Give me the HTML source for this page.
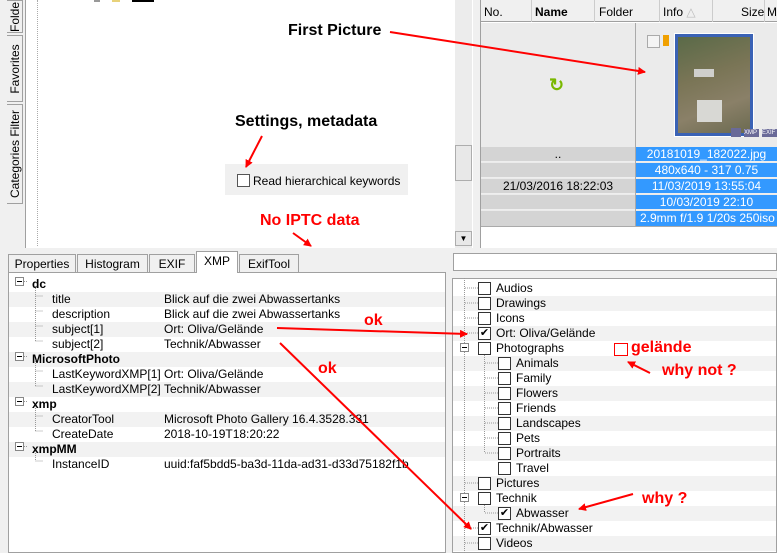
<!DOCTYPE html>
<html><head><meta charset="utf-8"><style>
*{margin:0;padding:0;box-sizing:border-box}
body{width:777px;height:553px;overflow:hidden;background:#f0f0f0;font-family:"Liberation Sans",sans-serif;font-size:12px;color:#000;position:relative}
.a{position:absolute}
.vt{position:absolute;left:7px;width:16px;background:#f0f0f0;border:1px solid #a0a0a0;border-left:none}
.vt span{position:absolute;left:50%;top:50%;transform:translate(-50%,-50%) rotate(-90deg);white-space:nowrap;font-size:12px}
.row{position:absolute;left:0;right:0;height:15px;line-height:15px;white-space:nowrap}
.g{background:#f2f2f2}
.cb{position:absolute;width:13px;height:13px;border:1px solid #333;background:#fff;font-size:11px;line-height:11px;text-align:center}
.cell{position:absolute;height:15px;line-height:15px;text-align:center;white-space:nowrap}
.tab{position:absolute;top:254px;height:19px;line-height:19px;border:1px solid #a0a0a0;border-bottom:none;background:#f0f0f0;text-align:center;font-size:12px}
.ann{position:absolute;font-weight:bold;font-size:16px;white-space:nowrap}
.red{color:#f00}
</style></head><body>
<div class="a" style="left:0;top:0;width:8px;height:553px;background:#f0f0f0"></div>
<div class="vt" style="top:0;height:33px"><span>Folde</span></div>
<div class="vt" style="top:35px;height:67px"><span>Favorites</span></div>
<div class="vt" style="top:104px;height:100px"><span>Categories Filter</span></div>
<div class="a" style="left:25px;top:0;width:448px;height:248px;background:#fff;border-left:1px solid #a0a0a0"></div>
<div class="a" style="left:37px;top:0;height:246px;border-left:1px dotted #aaa"></div>
<div class="a" style="left:94px;top:0;width:6px;height:2px;background:#999"></div>
<div class="a" style="left:112px;top:0;width:8px;height:2px;background:#e8d27a"></div>
<div class="a" style="left:132px;top:0;width:22px;height:2px;background:#000"></div>
<div class="a" style="left:455px;top:0;width:17px;height:248px;background:#ececec"></div>
<div class="a" style="left:455px;top:145px;width:17px;height:36px;background:#e8e8e8;border:1px solid #adadad"></div>
<div class="a" style="left:455px;top:231px;width:17px;height:15px;background:#e8e8e8;border:1px solid #adadad;font-size:8px;text-align:center;line-height:13px">▼</div>
<div class="a" style="left:225px;top:164px;width:183px;height:31px;background:#f0f0f0"></div>
<div class="cb" style="left:237px;top:174px;border-color:#555"></div>
<div class="a" style="left:253px;top:174px;font-size:12px">Read hierarchical keywords</div>
<div class="ann" style="left:288px;top:22px">First Picture</div>
<div class="ann" style="left:235px;top:113px">Settings, metadata</div>
<div class="ann red" style="left:260px;top:212px">No IPTC data</div>
<div class="a" style="left:480px;top:0;width:297px;height:248px;background:#fff;border-left:1px solid #a0a0a0"></div>
<div class="a" style="left:481px;top:0;width:296px;height:22px;background:#f0f0f0;border-bottom:1px solid #a0a0a0"></div>
<div class="a" style="left:484px;top:5px">No.</div>
<div class="a" style="left:531px;top:0;height:22px;border-left:1px solid #ccc"></div>
<div class="a" style="left:535px;top:5px;font-weight:bold">Name</div>
<div class="a" style="left:594px;top:0;height:22px;border-left:1px solid #ccc"></div>
<div class="a" style="left:599px;top:5px">Folder</div>
<div class="a" style="left:659px;top:0;height:22px;border-left:1px solid #ccc"></div>
<div class="a" style="left:663px;top:5px">Info <span style="color:#bbb">△</span></div>
<div class="a" style="left:712px;top:0;height:22px;border-left:1px solid #ccc"></div>
<div class="a" style="left:741px;top:5px">Size</div>
<div class="a" style="left:764px;top:0;height:22px;border-left:1px solid #ccc"></div>
<div class="a" style="left:767px;top:5px">M</div>
<div class="a" style="left:481px;top:23px;width:296px;height:204px;background:#ebebeb;border-bottom:1px solid #aaa"></div>
<div class="a" style="left:635px;top:23px;height:204px;border-left:1px solid #aaa"></div>
<div class="a" style="left:549px;top:75px;color:#7ab800;font-size:18px;font-weight:bold">↻</div>
<div class="cb" style="left:647px;top:35px;border-color:#aaa;background:#f4f4f4"></div>
<div class="a" style="left:663px;top:35px;width:6px;height:11px;background:#f0a000"></div>
<div class="a" style="left:675px;top:34px;width:78px;height:102px;border:3px solid #3a62b5;outline:1px solid #fff;background:linear-gradient(160deg,#5a6a48,#7a7556 40%,#8a8068 70%,#6b6a50)"></div>
<div class="a" style="left:697px;top:100px;width:25px;height:22px;background:#d8d8d4"></div>
<div class="a" style="left:694px;top:69px;width:20px;height:8px;background:#cfcfcc"></div>
<div class="a" style="left:731px;top:128px;width:10px;height:9px;background:#6a6a98"></div>
<div class="a" style="left:744px;top:129px;width:15px;height:8px;background:#6a6a98;color:#fff;font-size:6px;line-height:8px">XMP</div>
<div class="a" style="left:762px;top:129px;width:15px;height:8px;background:#6a6a98;color:#fff;font-size:6px;line-height:8px">EXIF</div>
<div class="cell" style="left:481px;top:147px;width:154px;background:#d4d4d4;border-bottom:1px solid #eee">..</div>
<div class="cell" style="left:481px;top:163px;width:154px;background:#d4d4d4;border-bottom:1px solid #eee"></div>
<div class="cell" style="left:481px;top:179px;width:154px;background:#d4d4d4;border-bottom:1px solid #eee">21/03/2016 18:22:03</div>
<div class="cell" style="left:481px;top:195px;width:154px;background:#d4d4d4;border-bottom:1px solid #eee"></div>
<div class="cell" style="left:481px;top:211px;width:154px;background:#d4d4d4"></div>
<div class="cell" style="left:636px;top:147px;width:141px;background:#3399ff;color:#fff;border-bottom:1px solid #eee">20181019_182022.jpg</div>
<div class="cell" style="left:636px;top:163px;width:141px;background:#3399ff;color:#fff;border-bottom:1px solid #eee">480x640 - 317 0.75</div>
<div class="cell" style="left:636px;top:179px;width:141px;background:#3399ff;color:#fff;border-bottom:1px solid #eee">11/03/2019 13:55:04</div>
<div class="cell" style="left:636px;top:195px;width:141px;background:#3399ff;color:#fff;border-bottom:1px solid #eee">10/03/2019 22:10</div>
<div class="cell" style="left:636px;top:211px;width:141px;background:#3399ff;color:#fff;text-align:left;padding-left:4px">2.9mm f/1.9 1/20s 250iso 0.</div>
<div class="tab" style="left:8px;width:68px">Properties</div>
<div class="tab" style="left:77px;width:71px">Histogram</div>
<div class="tab" style="left:149px;width:46px">EXIF</div>
<div class="tab" style="left:196px;width:42px;top:251px;height:22px;background:#fff;z-index:2">XMP</div>
<div class="tab" style="left:239px;width:60px">ExifTool</div>
<div class="a" style="left:8px;top:272px;width:438px;height:281px;background:#fff;border:1px solid #a0a0a0;overflow:hidden">
<div class="a" style="left:0;top:1px;width:436px;height:200px">
<div class="row" style="top:3px"><b style="position:absolute;left:23px">dc</b></div>
<div class="row g" style="top:18px"><span class="a" style="left:43px">title</span><span class="a" style="left:155px">Blick auf die zwei Abwassertanks</span></div>
<div class="row" style="top:33px"><span class="a" style="left:43px">description</span><span class="a" style="left:155px">Blick auf die zwei Abwassertanks</span></div>
<div class="row g" style="top:48px"><span class="a" style="left:43px">subject[1]</span><span class="a" style="left:155px">Ort: Oliva/Gelände</span></div>
<div class="row" style="top:63px"><span class="a" style="left:43px">subject[2]</span><span class="a" style="left:155px">Technik/Abwasser</span></div>
<div class="row g" style="top:78px"><b class="a" style="left:23px">MicrosoftPhoto</b></div>
<div class="row" style="top:93px"><span class="a" style="left:43px">LastKeywordXMP[1]</span><span class="a" style="left:155px">Ort: Oliva/Gelände</span></div>
<div class="row g" style="top:108px"><span class="a" style="left:43px">LastKeywordXMP[2]</span><span class="a" style="left:155px">Technik/Abwasser</span></div>
<div class="row" style="top:123px"><b class="a" style="left:23px">xmp</b></div>
<div class="row g" style="top:138px"><span class="a" style="left:43px">CreatorTool</span><span class="a" style="left:155px">Microsoft Photo Gallery 16.4.3528.331</span></div>
<div class="row" style="top:153px"><span class="a" style="left:43px">CreateDate</span><span class="a" style="left:155px">2018-10-19T18:20:22</span></div>
<div class="row g" style="top:168px"><b class="a" style="left:23px">xmpMM</b></div>
<div class="row" style="top:183px"><span class="a" style="left:43px">InstanceID</span><span class="a" style="left:155px">uuid:faf5bdd5-ba3d-11da-ad31-d33d75182f1b</span></div>
</div>
</div>
<svg class="a" style="left:8px;top:270px" width="40" height="200">
<g fill="#fff" stroke="#888"><rect x="7.5" y="7.5" width="8" height="8"/><rect x="7.5" y="82.5" width="8" height="8"/><rect x="7.5" y="127.5" width="8" height="8"/><rect x="7.5" y="172.5" width="8" height="8"/></g>
<g stroke="#000"><line x1="9" y1="11.5" x2="14" y2="11.5"/><line x1="9" y1="86.5" x2="14" y2="86.5"/><line x1="9" y1="131.5" x2="14" y2="131.5"/><line x1="9" y1="176.5" x2="14" y2="176.5"/></g>
<g stroke="#999" stroke-dasharray="1,1"><path d="M27.5 16V72M27.5 26H35M27.5 41H35M27.5 56H35M27.5 71H35M27.5 91V117M27.5 101H35M27.5 116H35M27.5 136V162M27.5 146H35M27.5 161H35M27.5 181V191M27.5 191H35M16 11.5H20M16 86.5H20M16 131.5H20M16 176.5H20"/></g>
</svg>
<div class="a" style="left:453px;top:253px;width:324px;height:18px;background:#fff;border:1px solid #a0a0a0"></div>
<div class="a" style="left:452px;top:278px;width:325px;height:275px;background:#fff;border:1px solid #a0a0a0;overflow:hidden">
<div class="row g" style="top:17px"></div>
<div class="row g" style="top:47px"></div>
<div class="row g" style="top:77px"></div>
<div class="row g" style="top:107px"></div>
<div class="row g" style="top:137px"></div>
<div class="row g" style="top:167px"></div>
<div class="row g" style="top:197px"></div>
<div class="row g" style="top:227px"></div>
<div class="row g" style="top:257px"></div>
</div>
<svg class="a" style="left:452px;top:278px" width="60" height="275">
<g stroke="#999" stroke-dasharray="1,1" fill="none"><path d="M12.5 0V275M13 10H26M13 25H26M13 40H26M13 55H26M13 205H26M13 250H26M13 265H26M32.5 77V175M33 85H46M33 100H46M33 115H46M33 130H46M33 145H46M33 160H46M33 175H46M32.5 227V235M33 235H46"/></g>
<g fill="#fff" stroke="#888"><rect x="8.5" y="65.5" width="8" height="8"/><rect x="8.5" y="215.5" width="8" height="8"/></g>
<g stroke="#000"><line x1="10" y1="69.5" x2="15" y2="69.5"/><line x1="10" y1="219.5" x2="15" y2="219.5"/></g>
</svg>
<div class="cb" style="left:478px;top:282px"></div><div class="a" style="left:496px;top:281px">Audios</div>
<div class="cb" style="left:478px;top:297px"></div><div class="a" style="left:496px;top:296px">Drawings</div>
<div class="cb" style="left:478px;top:312px"></div><div class="a" style="left:496px;top:311px">Icons</div>
<div class="cb" style="left:478px;top:327px">✔</div><div class="a" style="left:496px;top:326px">Ort: Oliva/Gelände</div>
<div class="cb" style="left:478px;top:342px"></div><div class="a" style="left:496px;top:341px">Photographs</div>
<div class="cb" style="left:498px;top:357px"></div><div class="a" style="left:516px;top:356px">Animals</div>
<div class="cb" style="left:498px;top:372px"></div><div class="a" style="left:516px;top:371px">Family</div>
<div class="cb" style="left:498px;top:387px"></div><div class="a" style="left:516px;top:386px">Flowers</div>
<div class="cb" style="left:498px;top:402px"></div><div class="a" style="left:516px;top:401px">Friends</div>
<div class="cb" style="left:498px;top:417px"></div><div class="a" style="left:516px;top:416px">Landscapes</div>
<div class="cb" style="left:498px;top:432px"></div><div class="a" style="left:516px;top:431px">Pets</div>
<div class="cb" style="left:498px;top:447px"></div><div class="a" style="left:516px;top:446px">Portraits</div>
<div class="cb" style="left:498px;top:462px"></div><div class="a" style="left:516px;top:461px">Travel</div>
<div class="cb" style="left:478px;top:477px"></div><div class="a" style="left:496px;top:476px">Pictures</div>
<div class="cb" style="left:478px;top:492px"></div><div class="a" style="left:496px;top:491px">Technik</div>
<div class="cb" style="left:498px;top:507px">✔</div><div class="a" style="left:516px;top:506px">Abwasser</div>
<div class="cb" style="left:478px;top:522px">✔</div><div class="a" style="left:496px;top:521px">Technik/Abwasser</div>
<div class="cb" style="left:478px;top:537px"></div><div class="a" style="left:496px;top:536px">Videos</div>
<div class="a" style="left:614px;top:343px;width:14px;height:13px;border:1px solid #f00"></div>
<div class="ann red" style="left:631px;top:339px">gelände</div>
<div class="ann red" style="left:662px;top:362px">why not ?</div>
<div class="ann red" style="left:642px;top:490px">why ?</div>
<div class="ann red" style="left:364px;top:312px">ok</div>
<div class="ann red" style="left:318px;top:360px">ok</div>
<svg class="a" style="left:0;top:0;z-index:5" width="777" height="553">
<defs><marker id="m" markerWidth="8" markerHeight="8" refX="7" refY="4" orient="auto" markerUnits="userSpaceOnUse"><path d="M0 0L8 4L0 8z" fill="#f00"/></marker></defs>
<g stroke="#f00" stroke-width="2" fill="none" marker-end="url(#m)">
<line x1="390" y1="32" x2="645" y2="72"/>
<line x1="262" y1="136" x2="246" y2="167"/>
<line x1="293" y1="233" x2="311" y2="246"/>
<line x1="277" y1="328" x2="467" y2="334"/>
<line x1="280" y1="343" x2="471" y2="529"/>
<line x1="650" y1="373" x2="628" y2="362"/>
<line x1="633" y1="494" x2="579" y2="509"/>
</g></svg>
</body></html>
